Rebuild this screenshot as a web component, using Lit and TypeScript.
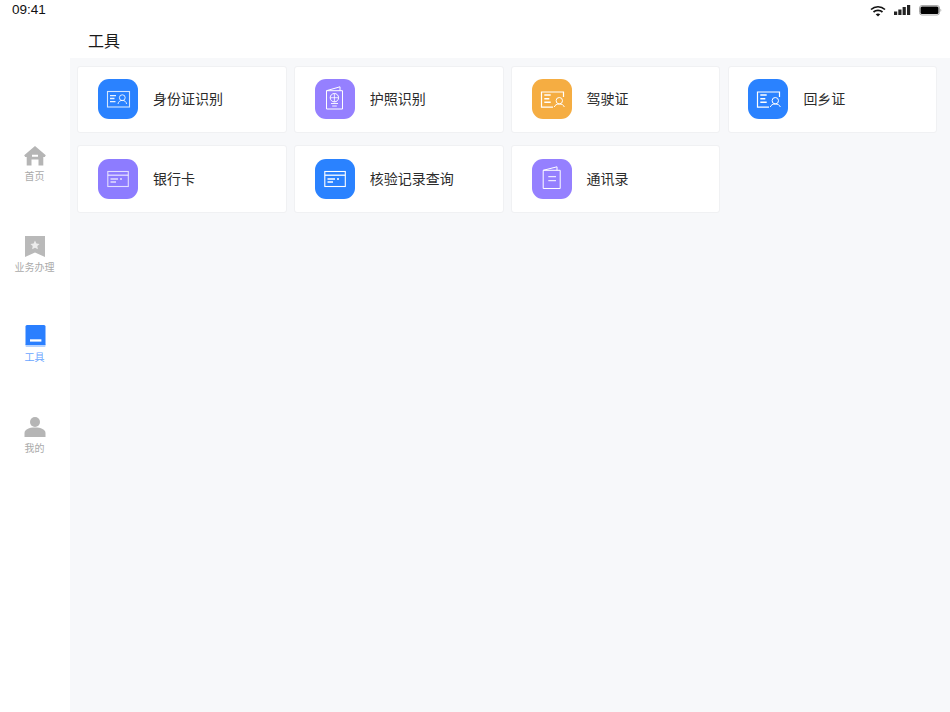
import { LitElement, html, css, svg } from "lit";
import { customElement } from "lit/decorators.js";

const idFrame = svg`
  <rect x="2.500" y="5.500" width="22" height="15.500" fill="none" stroke="#fff" stroke-opacity=".8" stroke-width="1.100"/>
  <path d="M5 9.700h6M5 12.500h4.500M5 15.700h5.500" stroke="#fff" stroke-opacity=".9" stroke-width="1.300"/>
  <circle cx="17.300" cy="11.700" r="2.900" fill="none" stroke="#fff" stroke-opacity=".85" stroke-width="1"/>
  <path d="M13 18c.5-2.600 2.200-3.600 4.300-3.600s3.800 1 4.300 3.600" fill="none" stroke="#fff" stroke-opacity=".85" stroke-width="1"/>
`;
const licence = svg`
  <path d="M14 21.200H2.500V6H24.500V11" fill="none" stroke="#fff" stroke-width="1.200"/>
  <path d="M5.300 9h6.400M5.300 12.700h5M5.300 16.300h6.400" stroke="#fff" stroke-width="1.400"/>
  <circle cx="20.300" cy="14.700" r="3.200" fill="none" stroke="#fff" stroke-width="1"/>
  <path d="M15.300 21c.6-2 2.400-3 5-3s4.400 1 5 3" fill="none" stroke="#fff" stroke-width="1"/>
`;
const bank = (o: number) => svg`
  <rect x="2.800" y="5.500" width="20.500" height="15" fill="none" stroke="#fff" stroke-opacity="${o}" stroke-width="1.100"/>
  <path d="M2.800 9.200h20.500" stroke="#fff" stroke-opacity="${o}" stroke-width="1.300"/>
  <path d="M5.500 13h7.500M5.500 16h5.500M15 13h2" stroke="#fff" stroke-opacity="${o}" stroke-width="1.300"/>
`;
const passport = svg`
  <path d="M4.500 4.700H20.500V23H4.500ZM4.500 4.700 18 .8V4.700" fill="none" stroke="#fff" stroke-width="1"/>
  <circle cx="12.400" cy="11.700" r="4.200" fill="none" stroke="#fff" stroke-width="1"/>
  <path d="M8.200 11.700h8.400M12.400 7.500v8.400" stroke="#fff" stroke-width=".8"/>
  <path d="M9 17.500h7M10.200 20h4.600" stroke="#fff" stroke-width=".9"/>
`;
const book = svg`
  <path d="M4.200 4.300H21.200V22.500H4.200ZM4.200 4.300 18 .8V4.300" fill="none" stroke="#fff" stroke-width="1"/>
  <path d="M9.300 10.700h7.700M9.300 14.700h7.700" stroke="#fff" stroke-width="1"/>
`;

const tools = [
  { name: "身份证识别", color: "#2a82ff", icon: idFrame },
  { name: "护照识别", color: "#9580ff", icon: passport },
  { name: "驾驶证", color: "#f5ad42", icon: licence },
  { name: "回乡证", color: "#2a82ff", icon: licence },
  { name: "银行卡", color: "#8d7cff", icon: bank(0.75) },
  { name: "核验记录查询", color: "#2a82ff", icon: bank(1) },
  { name: "通讯录", color: "#9580ff", icon: book },
];

@customElement("app-root")
export class AppRoot extends LitElement {
  static styles = css`
    :host {
      display: block;
      width: 950px;
      height: 712px;
      overflow: hidden;
      background: #fff;
      font-family: "Liberation Sans", "Noto Sans CJK SC", sans-serif;
    }
    .status {
      height: 20px;
      display: flex;
      align-items: center;
      justify-content: space-between;
      padding: 0 8px 0 12px;
      font-family: "Liberation Sans", sans-serif;
      font-size: 13.500px;
      color: #111;
    }
    .time { padding-bottom: 2px; }
    .status-icons { display: flex; align-items: center; gap: 8px; padding-top: 1px; }
    .status-icons svg { display: block; }
    .body { display: flex; height: 692px; }
    .side {
      width: 70px;
      flex: none;
      box-sizing: border-box;
      padding-top: 122px;
      display: flex;
      flex-direction: column;
    }
    .nav {
      height: 90.67px;
      flex: none;
      display: flex;
      flex-direction: column;
      align-items: center;
      font-size: 10px;
      line-height: 14px;
      color: #aaa;
      padding-right: 1px;
      box-sizing: border-box;
    }
    .glyph {
      height: 24px;
      display: flex;
      align-items: flex-end;
      margin-bottom: 4px;
    }
    .glyph svg { display: block; }
    .nav.active { color: #6aa5ff; }
    .main { flex: 1; display: flex; flex-direction: column; min-width: 0; }
    .title {
      height: 38px;
      flex: none;
      box-sizing: border-box;
      padding: 11px 0 0 18px;
      font-size: 16px;
      line-height: 22px;
      color: #1a1a1a;
    }
    .content {
      flex: 1;
      background: #f7f8fa;
      padding: 7.700px 0 0 7.300px;
      display: grid;
      grid-template-columns: repeat(4, 209.500px);
      grid-auto-rows: 67.500px;
      column-gap: 7.300px;
      row-gap: 12px;
      align-content: start;
    }
    .card {
      box-sizing: border-box;
      background: #fff;
      border: 1px solid #f0f1f3;
      border-radius: 3px;
      display: flex;
      align-items: center;
      padding-left: 19.700px;
      gap: 15px;
    }
    .icon {
      width: 40px;
      height: 40px;
      border-radius: 11px;
      display: flex;
      align-items: center;
      justify-content: center;
      flex: none;
    }
    .icon svg { display: block; }
    .name { font-size: 14px; color: #2b2b2b; line-height: 20px; }
  `;

  render() {
    return html`
      <div class="status">
        <span class="time">09:41</span>
        <div class="status-icons">
          <svg width="16" height="12" viewBox="0 0 16 12">
            <path d="M1 4.500C5 .8 11 .8 15 4.500" fill="none" stroke="#111" stroke-width="1.700"/>
            <path d="M3.500 7C6 4.800 10 4.800 12.500 7" fill="none" stroke="#111" stroke-width="1.700"/>
            <path d="M8 11.500 5.700 9.200C7 8.100 9 8.100 10.300 9.200Z" fill="#111"/>
          </svg>
          <svg width="17" height="11" viewBox="0 0 17 11" fill="#222">
            <rect x="0" y="6.500" width="3.200" height="3.500"/>
            <rect x="4.300" y="4.500" width="3.200" height="5.500"/>
            <rect x="8.600" y="2" width="3.200" height="8"/>
            <rect x="13" y="0" width="3.200" height="10"/>
          </svg>
          <svg width="23" height="11" viewBox="0 0 23 11">
            <rect x=".5" y=".5" width="20" height="9.500" rx="2.500" fill="none" stroke="#aaa" stroke-width="1"/>
            <rect x="1.500" y="1.500" width="18" height="7.500" rx="1.500" fill="#000"/>
            <path d="M21.500 3.800c1 .3 1 2.600 0 3Z" fill="#999"/>
          </svg>
        </div>
      </div>
      <div class="body">
        <aside class="side">
          <div class="nav">
            <div class="glyph">
              <svg width="22" height="20" viewBox="0 0 22 20">
                <path d="M11 0 21.800 9.300 20.800 11H19.300V19.500H2.700V11H1.200L.2 9.300ZM8 8.800V10.800H14V8.800ZM7.500 13.500V19.500H14.500V13.500Z" fill="#b5b5b5" fill-rule="evenodd"/>
              </svg>
            </div>
            <span>首页</span>
          </div>
          <div class="nav">
            <div class="glyph">
              <svg width="22" height="21" viewBox="0 0 22 21">
                <path d="M1 0H21V21L11 16.500 1 21Z" fill="#b9b9b9"/>
                <path d="M11 4.500 12.400 7.500 15.600 7.900 13.300 10.100 13.900 13.300 11 11.700 8.100 13.300 8.700 10.100 6.400 7.900 9.600 7.500Z" fill="#ececec"/>
              </svg>
            </div>
            <span>业务办理</span>
          </div>
          <div class="nav active">
            <div class="glyph">
              <svg width="22" height="22" viewBox="0 0 22 22">
                <path d="M1.500 19H21.500V21Q21.500 22 20.500 22H2.500Q1.500 22 1.500 21Z" fill="#b5d2ff"/>
                <path d="M3 0H20Q21.500 0 21.500 1.500V20H1.500V1.500Q1.500 0 3 0Z" fill="#2a7fff"/>
                <rect x="6" y="14.300" width="11.400" height="2.300" fill="#fff"/>
              </svg>
            </div>
            <span>工具</span>
          </div>
          <div class="nav">
            <div class="glyph">
              <svg width="22" height="21" viewBox="0 0 22 21">
                <circle cx="11" cy="5" r="5" fill="#b5b5b5"/>
                <path d="M.5 20V16C.5 12.500 5 10.500 11 10.500S21.500 12.500 21.500 16V20Z" fill="#b5b5b5"/>
              </svg>
            </div>
            <span>我的</span>
          </div>
        </aside>
        <main class="main">
          <div class="title">工具</div>
          <div class="content">
            ${tools.map(
              (t) => html`
                <div class="card">
                  <div class="icon" style="background:${t.color}">
                    <svg width="26" height="26" viewBox="0 0 26 26">${t.icon}</svg>
                  </div>
                  <span class="name">${t.name}</span>
                </div>
              `
            )}
          </div>
        </main>
      </div>
    `;
  }
}
